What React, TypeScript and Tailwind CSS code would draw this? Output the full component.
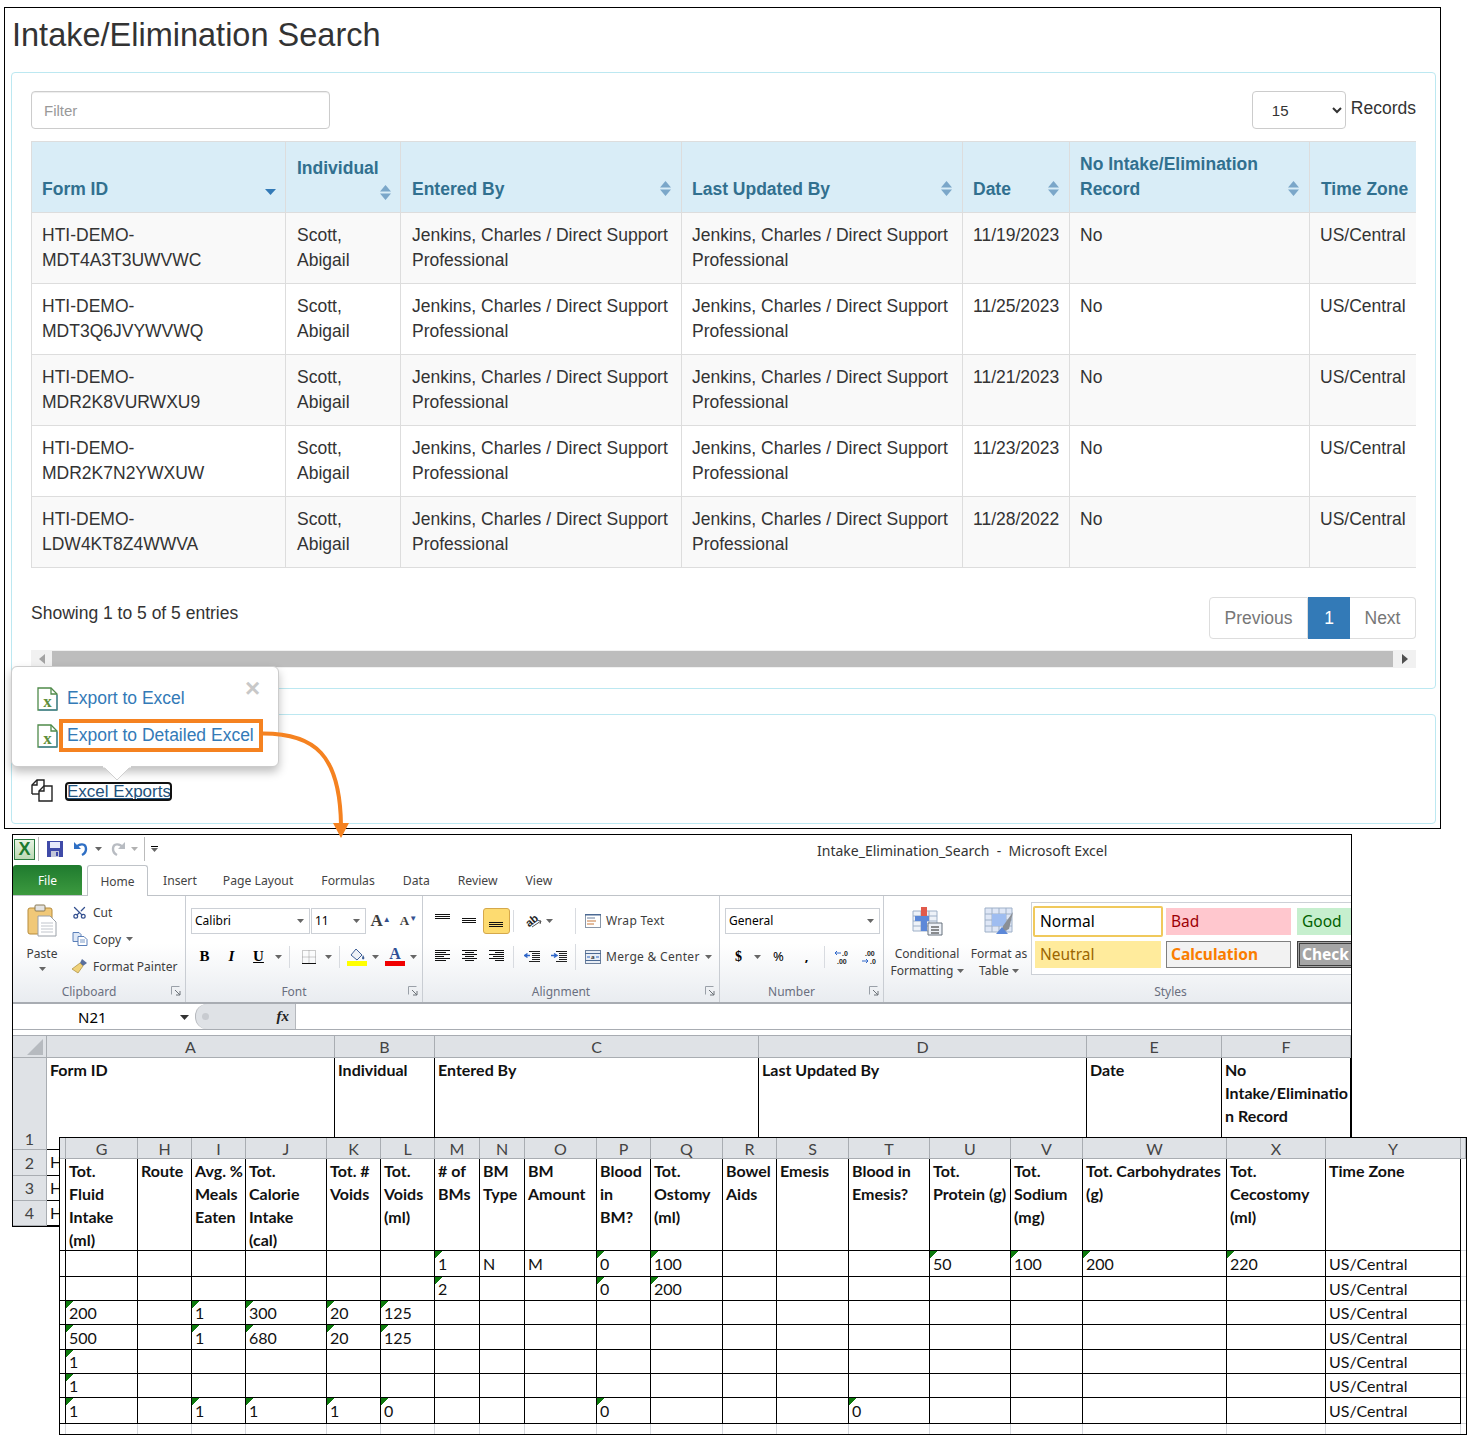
import { Scissors } from 'lucide-react'

const rows = [
  ['HTI-DEMO-', 'MDT4A3T3UWVWC', '11/19/2023'],
  ['HTI-DEMO-', 'MDT3Q6JVYWVWQ', '11/25/2023'],
  ['HTI-DEMO-', 'MDR2K8VURWXU9', '11/21/2023'],
  ['HTI-DEMO-', 'MDR2K7N2YWXUW', '11/23/2023'],
  ['HTI-DEMO-', 'LDW4KT8Z4WWVA', '11/28/2022'],
]

function SortIcon({ sorted, mb = 'mb-[6px]' }: { sorted?: boolean; mb?: string }) {
  if (sorted) {
    return (
      <svg width="11" height="6" viewBox="0 0 11 6" className="mb-[7px] mr-[-1px] shrink-0">
        <path d="M0 0h11L5.5 6z" fill="#337ab7" />
      </svg>
    )
  }
  return (
    <svg width="11" height="15" viewBox="0 0 11 15" className={`${mb} shrink-0`}>
      <path d="M5.5 0L11 6.5H0z M0 8.5h11L5.5 15z" fill="#7ba7c9" />
    </svg>
  )
}

function Th({ children, sorted, stack, pad = 'pl-[10px]' }: { children: React.ReactNode; sorted?: boolean; stack?: boolean; pad?: string }) {
  return (
    <th className={`border border-[#ddd] py-[10px] pr-[10px] ${pad} text-left align-bottom font-bold text-[#31708f]`}>
      {stack ? (
        <div className="flex flex-col">
          <span>{children}</span>
          <span className="mr-[-1px] flex h-[21px] items-end justify-end">
            <SortIcon mb="mb-[2px]" />
          </span>
        </div>
      ) : (
        <div className="flex items-end justify-between">
          <span>{children}</span>
          <SortIcon sorted={sorted} />
        </div>
      )}
    </th>
  )
}

function ExcelFile() {
  return (
    <svg width="21" height="24" viewBox="0 0 21 24" className="shrink-0">
      <path d="M1 1h13l6 6v16H1z" fill="#fff" stroke="#4f8a4a" strokeWidth="1.3" />
      <path d="M14 1v6h6" fill="none" stroke="#4f8a4a" strokeWidth="1.3" />
      <path d="M20 8v15H2" fill="none" stroke="#3a7cb0" strokeWidth="1" />
      <text x="10.5" y="20" textAnchor="middle" fontSize="17" fontWeight="700" fill="#5e8f3a" fontFamily="Liberation Serif, serif">x</text>
    </svg>
  )
}

function WebWindow() {
  const td = 'border border-[#ddd] p-[10px] align-top'
  return (
    <div className="absolute left-[4px] top-[7px] h-[822px] w-[1437px] border border-black bg-white font-['Liberation_Sans',Arial,sans-serif] text-[17.5px] leading-[25px] text-[#333]">
      <div className="h-[64px] pl-[7px] pt-[9px] text-[32.5px] leading-[36px]">Intake/Elimination Search</div>

      <div className="ml-[6px] mr-[4px] h-[617px] rounded border border-[#bce8f1] px-[19px] pt-[18px]">
        <div className="flex h-[38px] justify-between">
          <input
            placeholder="Filter"
            className="h-[38px] w-[299px] rounded border border-[#ccc] px-[12px] text-[15px] shadow-[inset_0_1px_1px_rgba(0,0,0,0.075)] placeholder:text-[#999]"
          />
          <div className="flex gap-[5px]">
            <select className="h-[38px] w-[94px] rounded border border-[#ccc] bg-white pl-[15px] text-[15px]">
              <option>15</option>
            </select>
            <span className="mt-[5px]">Records</span>
          </div>
        </div>

        <div className="mt-[12px] overflow-hidden">
          <table className="w-[1385px] table-fixed border-collapse">
            <colgroup>
              <col className="w-[254px]" />
              <col className="w-[115px]" />
              <col className="w-[281px]" />
              <col className="w-[281px]" />
              <col className="w-[107px]" />
              <col className="w-[240px]" />
              <col className="w-[107px]" />
            </colgroup>
            <thead>
              <tr className="h-[71px] bg-[#d9edf7]">
                <Th sorted>Form ID</Th>
                <Th stack pad="pl-[11px]">Individual</Th>
                <Th pad="pl-[11px]">Entered By</Th>
                <Th>Last Updated By</Th>
                <Th>Date</Th>
                <Th>No Intake/Elimination Record</Th>
                <th className="border-y border-l border-[#ddd] p-[10px] pl-[11px] pr-0 text-left align-bottom font-bold whitespace-nowrap text-[#31708f]">Time Zone</th>
              </tr>
            </thead>
            <tbody>
              {rows.map((r, i) => (
                <tr key={r[1]} className={`h-[71px] ${i % 2 === 0 ? 'bg-[#f9f9f9]' : 'bg-white'}`}>
                  <td className={td}>{r[0]}<br />{r[1]}</td>
                  <td className={`${td} pl-[11px]`}>Scott,<br />Abigail</td>
                  <td className={`${td} pl-[11px] whitespace-nowrap`}>Jenkins, Charles / Direct Support<br />Professional</td>
                  <td className={`${td} whitespace-nowrap`}>Jenkins, Charles / Direct Support<br />Professional</td>
                  <td className={td}>{r[2]}</td>
                  <td className={td}>No</td>
                  <td className="border-y border-l border-[#ddd] p-[10px] pr-0 align-top">US/Central</td>
                </tr>
              ))}
            </tbody>
          </table>
        </div>

        <div className="mt-[29px] flex h-[42px] items-start justify-between">
          <span className="mt-[4px]">Showing 1 to 5 of 5 entries</span>
          <div className="flex h-[42px] items-stretch">
            <span className="flex w-[99px] items-center justify-center rounded-l border border-[#ddd] text-[#777]">Previous</span>
            <span className="flex w-[42px] items-center justify-center bg-[#337ab7] text-white">1</span>
            <span className="flex w-[66px] items-center justify-center rounded-r border border-l-0 border-[#ddd] text-[#777]">Next</span>
          </div>
        </div>

        <div className="mt-[11px] flex h-[18px] items-center bg-[#f1f1f1]">
          <span className="flex w-[21px] justify-center">
            <svg width="6" height="10" viewBox="0 0 6 10"><path d="M6 0v10L0 5z" fill="#a3a3a3" /></svg>
          </span>
          <span className="h-[16px] flex-1 bg-[#bdbdbd]" />
          <span className="flex w-[23px] justify-center">
            <svg width="6" height="10" viewBox="0 0 6 10"><path d="M0 0v10l6-5z" fill="#505050" /></svg>
          </span>
        </div>
      </div>

      <div className="ml-[6px] mr-[4px] mt-[25px] flex h-[110px] items-end gap-[14px] rounded border border-[#bce8f1] px-[19px] pb-[24px]">
        <svg width="22" height="24" viewBox="0 0 22 24" fill="none" stroke="#222" strokeWidth="1.4" className="mb-[-3px]">
          <path d="M1 16V7l5-5h7v6" />
          <path d="M6 2v5H1" />
          <path d="M1 16h7" />
          <path d="M8 23V13l5-5h8v15z" fill="#fff" />
          <path d="M13 8v5H8" />
        </svg>
        <a className="h-[15px] w-[103px] overflow-visible whitespace-nowrap rounded-[2px] text-[17px] leading-[15px] text-[#23527c] underline outline-2 outline-[#111]">Excel Exports</a>
      </div>
    </div>
  )
}

function Popover() {
  return (
    <>
      <div className="absolute left-[11px] top-[666px] h-[101px] w-[268px] whitespace-nowrap rounded-md border border-[#ccc] bg-white pl-[25px] pt-[19px] font-['Liberation_Sans',Arial,sans-serif] text-[17.5px] leading-[25px] text-[#337ab7] shadow-[0_5px_10px_rgba(0,0,0,0.25)]">
        <span className="absolute left-[233px] top-[9px] text-[26px] font-bold text-[#c8c8c8]">×</span>
        <div className="flex h-[25px] items-center gap-[9px]">
          <ExcelFile />
          <span>Export to Excel</span>
        </div>
        <div className="mt-[8px] flex h-[33px] items-center gap-[1px]">
          <ExcelFile />
          <span className="flex h-[33px] w-[204px] items-center border-4 border-[#f58220] pl-[4px]">Export to Detailed Excel</span>
        </div>
      </div>
      <svg width="28" height="14" viewBox="0 0 28 14" className="absolute left-[103px] top-[766px]">
        <path d="M1 1l13 13L27 1" fill="#fff" stroke="#d0d0d0" />
        <path d="M0 0h28v1.5H0z" fill="#fff" />
      </svg>
      <svg width="100" height="120" viewBox="0 0 100 120" className="absolute left-[260px] top-[725px]">
        <path d="M3 8.5C55 8.5 80 30 81 100" fill="none" stroke="#f58220" strokeWidth="4" />
        <path d="M73 98h16l-8 15z" fill="#f58220" />
      </svg>
    </>
  )
}

const caret = <svg width="7" height="4" viewBox="0 0 7 4"><path d="M0 0h7L3.5 4z" fill="#666" /></svg>

function Launcher() {
  return (
    <svg width="10" height="10" viewBox="0 0 10 10">
      <path d="M.5 .5h8M.5 .5v8" stroke="#9aa0a8" fill="none" />
      <path d="M4 4l5 5M5 9h4V5" stroke="#6d7379" fill="none" />
    </svg>
  )
}

function Group({ w, label, launcher, labelClass = '', children }: { w: string; label: string; launcher?: boolean; labelClass?: string; children: React.ReactNode }) {
  return (
    <div className={`${w} flex h-full shrink-0 flex-col border-r border-[#c9cdd3]`}>
      <div className="flex-1">{children}</div>
      <div className="flex h-[22px] items-center">
        <span className={`flex-1 text-center text-[12px] text-[#6a6f7f] ${labelClass} ${launcher ? 'pr-[6px]' : ''}`}>{label}</span>
        {launcher && <span className="mr-[4px] flex"><Launcher /></span>}
      </div>
    </div>
  )
}

function Btn({ children, w = 'w-[27px]', active }: { children: React.ReactNode; w?: string; active?: boolean }) {
  return (
    <span className={`flex h-[26px] shrink-0 items-center justify-center ${w} ${active ? 'rounded-[3px] border border-[#d5a84b] bg-[#fddb70]' : ''}`}>
      {children}
    </span>
  )
}

function Lines({ widths, align = 'left', top = 0 }: { widths: number[]; align?: 'left' | 'center' | 'right'; top?: number }) {
  return (
    <svg width="15" height="13" viewBox="0 0 15 13">
      {widths.map((w, i) => {
        const x = align === 'left' ? 0 : align === 'right' ? 15 - w : (15 - w) / 2
        return <path key={i} d={`M${x} ${top + i * 2 + 0.5}h${w}`} stroke="#111" strokeWidth="1" />
      })}
    </svg>
  )
}

function Indent({ flip }: { flip?: boolean }) {
  return (
    <svg width="16" height="14" viewBox="0 0 16 14">
      <path d="M5 1.5h11M8 3.5h8M8 5.5h8M8 7.5h8M8 9.5h8M5 11.5h11" stroke="#222" />
      <path d={flip ? 'M0 5.5h5M3 3.5l3 2-3 2' : 'M1 5.5h5M3.5 3.5l-3 2 3 2'} stroke="#2f66c8" strokeWidth="1.5" fill="none" />
    </svg>
  )
}

function Sep({ h = 'h-[22px]', m = 'mx-[5px]' }: { h?: string; m?: string }) {
  return <span className={`w-px shrink-0 ${m} ${h} bg-[#d8dbe0]`} />
}

function FileTab({ children, m = '' }: { children: React.ReactNode; m?: string }) {
  return <span className={`flex h-[30px] items-center px-[14px] pt-[3px] text-[12.2px] text-[#444] ${m}`}>{children}</span>
}

function Ribbon() {
  return (
    <div className="flex h-[107px] bg-[linear-gradient(#ffffff_45%,#e9ecf0_100%)] text-[12px] leading-[15px] text-[#3d3d3d]">
      <Group w="w-[173px]" label="Clipboard" launcher>
        <div className="flex pt-[8px]">
          <div className="flex w-[58px] flex-col items-center">
            <svg width="30" height="33" viewBox="0 0 30 33">
              <rect x="1" y="4" width="24" height="26" rx="2" fill="#f0c878" stroke="#b68b3b" />
              <rect x="8" y="1" width="10" height="6" rx="1" fill="#e3e3e3" stroke="#8a7a55" />
              <path d="M11 12h12l6 6v14H11z" fill="#fff" stroke="#9aa0a8" />
              <path d="M14 19h12M14 22h12M14 25h12M14 28h12" stroke="#c1c5cc" />
            </svg>
            <span className="mt-[9px]">Paste</span>
            <span className="mt-[6px] flex">{caret}</span>
          </div>
          <div className="flex flex-col gap-[12px] pl-[1px] pt-[1px]">
            <span className="flex h-[15px] items-center gap-[5px]">
              <Scissors size={15} className="-rotate-90 text-[#34508f]" />
              <span className="ml-[1px]">Cut</span>
            </span>
            <span className="flex h-[15px] items-center gap-[5px]">
              <svg width="16" height="14" viewBox="0 0 16 14">
                <path d="M1 .5h6l2 2v7H1z" fill="#dfe9f7" stroke="#5a7fb8" />
                <path d="M6 4.5h6l3 3v6H6z" fill="#fff" stroke="#5a7fb8" />
                <path d="M8 8h5M8 10h5" stroke="#7a9ac8" />
              </svg>
              <span>Copy</span>
              {caret}
            </span>
            <span className="flex h-[15px] items-center gap-[5px]">
              <svg width="16" height="16" viewBox="0 0 16 16">
                <path d="M10 1l5 4-4 3-3-3z" fill="#5a6f9c" />
                <path d="M8 5l3 3-5 7-6-4z" fill="#f0d27a" stroke="#a88a3a" strokeWidth=".7" />
              </svg>
              <span>Format Painter</span>
            </span>
          </div>
        </div>
      </Group>

      <Group w="w-[237px]" label="Font" launcher>
        <div className="flex items-center pl-[5px] pt-[12px]">
          <span className="flex h-[26px] w-[119px] items-center justify-between border border-[#ccd0d6] bg-white pl-[3px] pr-[5px] text-black">Calibri{caret}</span>
          <span className="ml-[1px] flex h-[26px] w-[55px] items-center justify-between border border-[#ccd0d6] bg-white pl-[3px] pr-[5px] text-black">11{caret}</span>
          <Btn w="w-[29px]"><span className="font-['Liberation_Serif',serif] text-[17px] font-bold">A<sup className="text-[8px] text-[#34508f]">▲</sup></span></Btn>
          <Btn w="w-[27px]"><span className="font-['Liberation_Serif',serif] text-[13px] font-bold">A<sup className="text-[8px] text-[#34508f]">▼</sup></span></Btn>
        </div>
        <div className="mt-[10px] flex items-center pl-[5px] font-['Liberation_Serif',serif] text-[15px] text-black">
          <Btn><b>B</b></Btn>
          <Btn><b><i>I</i></b></Btn>
          <Btn><b className="underline">U</b></Btn>
          <span className="flex w-[12px] justify-center">{caret}</span>
          <Sep />
          <Btn>
            <svg width="14" height="14" viewBox="0 0 14 14">
              <path d="M.5 .5h13v13H.5zM7 .5v13M.5 7h13" fill="none" stroke="#999" strokeDasharray="1 1" />
              <path d="M0 13.5h14" stroke="#111" />
            </svg>
          </Btn>
          <span className="flex w-[12px] justify-center">{caret}</span>
          <Sep />
          <span className="flex w-[24px] flex-col items-center">
            <svg width="16" height="13" viewBox="0 0 16 13">
              <path d="M7 1l6 6-5 5-6-5z" fill="#eef1f6" stroke="#3e5f96" />
              <path d="M14 7c1 2 2 3 1 4s-2 0-2-1z" fill="#3e5f96" />
            </svg>
            <span className="h-[5px] w-[20px] bg-[#ffff00]" />
          </span>
          <span className="flex w-[12px] justify-center">{caret}</span>
          <span className="ml-[2px] flex w-[24px] flex-col items-center">
            <span className="h-[14px] text-[16px] font-bold leading-[14px] text-[#2f4f96]">A</span>
            <span className="h-[5px] w-[20px] bg-[#f00000]" />
          </span>
          <span className="flex w-[12px] justify-center">{caret}</span>
        </div>
      </Group>

      <Group w="w-[297px]" label="Alignment" launcher>
        <div className="flex items-center pl-[6px] pt-[12px]">
          <Btn><Lines widths={[15, 15, 15]} /></Btn>
          <Btn><Lines widths={[14, 14, 14]} top={4} /></Btn>
          <Btn active><Lines widths={[14, 14, 14]} top={8} /></Btn>
          <Sep m="mx-[3px]" />
          <span className="ml-[4px] flex">
            <Btn w="w-[24px]">
              <svg width="19" height="16" viewBox="0 0 19 16">
                <text x="2" y="12" fontSize="11" fontWeight="700" fill="#222" transform="rotate(-38 7 9)" fontFamily="Liberation Sans, sans-serif">ab</text>
                <path d="M8 14l9-6M14 7.5l3 .5-1 3" stroke="#555" fill="none" />
              </svg>
            </Btn>
          </span>
          <span className="flex w-[8px] justify-center">{caret}</span>
          <Sep h="h-[26px]" m="ml-[22px] mr-[9px]" />
          <span className="flex items-center gap-[5px] tracking-[0.3px]">
            <svg width="16" height="14" viewBox="0 0 16 14">
              <rect x=".5" y=".5" width="15" height="13" fill="#fff" stroke="#8a97a8" />
              <path d="M0 .5h16" stroke="#4c6a94" strokeWidth="2" />
              <path d="M2 4h8" stroke="#6b7f9c" /><path d="M2 7h9" stroke="#c8793a" /><path d="M2 10h7" stroke="#c8793a" />
            </svg>
            Wrap Text
          </span>
        </div>
        <div className="mt-[10px] flex items-center pl-[6px]">
          <Btn><Lines widths={[15, 11, 15, 9, 15, 11]} /></Btn>
          <Btn><Lines widths={[15, 9, 15, 9, 15, 9]} align="center" /></Btn>
          <Btn><Lines widths={[15, 9, 15, 11, 15, 9]} align="right" /></Btn>
          <Sep m="mx-[3px]" />
          <span className="ml-[1px] flex">
            <Btn><Indent /></Btn>
            <Btn><Indent flip /></Btn>
          </span>
          <Sep h="h-[26px]" m="ml-[3px] mr-[9px]" />
          <span className="flex items-center gap-[5px] tracking-[0.3px]">
            <svg width="16" height="14" viewBox="0 0 16 14">
              <rect x=".5" y=".5" width="15" height="13" fill="#e8edf4" stroke="#6b7f9c" />
              <path d="M0 3.5h16M.5 10.5h15" stroke="#4c6a94" />
              <path d="M2 7h3M11 7h3" stroke="#2f66c8" />
              <text x="8" y="9" fontSize="6" textAnchor="middle" fontWeight="700" fill="#333">a</text>
            </svg>
            Merge &amp; Center
            {caret}
          </span>
        </div>
      </Group>

      <Group w="w-[164px]" label="Number" launcher>
        <div className="pl-[5px] pt-[12px]">
          <span className="flex h-[26px] w-[155px] items-center justify-between border border-[#ccd0d6] bg-white pl-[3px] pr-[5px] text-black">General{caret}</span>
        </div>
        <div className="mt-[10px] flex items-center pl-[5px] text-[13px] text-black">
          <Btn><b className="font-['Liberation_Serif',serif] text-[14px]">$</b></Btn>
          <span className="flex w-[11px] justify-center">{caret}</span>
          <span className="ml-[2px] flex">
            <Btn><span>%</span></Btn>
            <Btn w="w-[29px]"><b>,</b></Btn>
          </span>
          <Sep m="ml-[3px] mr-[4px]" />
          <Btn>
            <svg width="18" height="16" viewBox="0 0 18 16">
              <text x="8" y="7" fontSize="7" fontWeight="700" fill="#222" fontFamily="Liberation Sans, sans-serif">.0</text>
              <text x="3" y="15" fontSize="7" fontWeight="700" fill="#222" fontFamily="Liberation Sans, sans-serif">.00</text>
              <path d="M1 4h6M3 2L1 4l2 2" stroke="#2f66c8" fill="none" />
            </svg>
          </Btn>
          <Btn>
            <svg width="18" height="16" viewBox="0 0 18 16">
              <text x="4" y="7" fontSize="7" fontWeight="700" fill="#222" fontFamily="Liberation Sans, sans-serif">.00</text>
              <text x="9" y="15" fontSize="7" fontWeight="700" fill="#222" fontFamily="Liberation Sans, sans-serif">.0</text>
              <path d="M1 12h6M5 10l2 2-2 2" stroke="#2f66c8" fill="none" />
            </svg>
          </Btn>
        </div>
      </Group>

      <Group w="flex-1 border-r-0" label="Styles" labelClass="pl-[100px]">
        <div className="flex pt-[6px]">
          <div className="mt-[4px] flex w-[86px] flex-col items-center text-center">
            <svg width="31" height="30" viewBox="0 0 31 30">
              <path d="M1 5h24v20H1z" fill="#eef2f8" stroke="#9eb0c8" />
              <path d="M1 10h24M1 15h24M1 20h24M9 5v20M17 5v20" stroke="#9eb0c8" />
              <path d="M9 1h6v14H9z" fill="#e15a4b" /><path d="M3 10h14v5H3z" fill="#5c88d8" /><path d="M9 15h6v10H9z" fill="#5c88d8" />
              <path d="M16 17h14v12H16z" fill="#eef2f8" stroke="#66707c" />
              <path d="M19 21h8M19 24h8M19 27h8" stroke="#222" />
            </svg>
            <span className="mt-[9px] leading-[17px]">Conditional<br />Formatting <span className="inline-flex align-middle">{caret}</span></span>
          </div>
          <div className="mt-[4px] flex w-[58px] flex-col items-center text-center">
            <svg width="31" height="30" viewBox="0 0 31 30">
              <path d="M1 2h27v24H1z" fill="#dfe7f6" stroke="#9eb0c8" />
              <path d="M1 8h27M1 14h27M1 20h27M8 2v24M15 2v24M22 2v24" stroke="#9eb0c8" />
              <path d="M8 8h14v12H8z" fill="#9fbdf0" />
              <path d="M29 6L19 20l-2 7 8-4z" fill="#8a8f96" />
              <path d="M18 21l-6 7h12z" fill="#5c88d8" />
            </svg>
            <span className="mt-[9px] whitespace-nowrap leading-[17px]">Format as<br />Table <span className="inline-flex align-middle">{caret}</span></span>
          </div>
          <div className="ml-[3px] flex h-[73px] flex-1 flex-col gap-[4px] overflow-hidden border border-r-0 border-[#ccd0d6] bg-white pl-[1px] pt-[3px] text-[15.5px]">
            <div className="flex h-[31px] items-center">
              <span className="flex h-[31px] w-[130px] items-center rounded-[2px] border-2 border-[#f0c95c] pl-[5px] text-black">Normal</span>
              <span className="ml-[3px] flex h-[27px] w-[125px] items-center bg-[#ffc7ce] pl-[5px] text-[#9c0006]">Bad</span>
              <span className="ml-[6px] flex h-[27px] w-[60px] items-center bg-[#c6efce] pl-[5px] text-[#006100]">Good</span>
            </div>
            <div className="flex h-[27px] items-center">
              <span className="ml-[2px] flex h-[27px] w-[126px] items-center bg-[#ffeb9c] pl-[5px] text-[#9c6500]">Neutral</span>
              <span className="ml-[5px] flex h-[27px] w-[125px] items-center border border-[#7f7f7f] bg-[#f2f2f2] pl-[4px] font-bold text-[#fa7d00]">Calculation</span>
              <span className="ml-[6px] flex h-[27px] w-[60px] items-center border-[3px] border-double border-[#3f3f3f] bg-[#a5a5a5] pl-[2px] font-bold text-white">Check</span>
            </div>
          </div>
        </div>
      </Group>
    </div>
  )
}

function ColHead({ children }: { children?: React.ReactNode }) {
  return <div className="flex items-center justify-center border-r border-b border-[#a9adb2] bg-[#dfe2e6] text-[16px] text-[#444]">{children}</div>
}

function RowHead({ children, bottom }: { children: React.ReactNode; bottom?: boolean }) {
  return <div className={`flex justify-center border-r border-b border-[#a9adb2] bg-[#dfe2e6] text-[16px] leading-[20px] text-[#444] ${bottom ? 'items-end' : 'items-center'}`}>{children}</div>
}

function BackCell({ text, bold }: { text?: string; bold?: boolean }) {
  return <div className={`whitespace-pre-line border-r border-b border-black pl-[3px] text-[16px] leading-[23px] text-[#111] ${bold ? 'font-bold' : ''}`}>{text}</div>
}

function ExcelWindow() {
  return (
    <div className="absolute left-[12px] top-[834px] flex h-[393px] w-[1340px] flex-col overflow-hidden border border-black bg-white font-['Noto_Sans',sans-serif]">
      <div className="flex h-[29px] items-center pl-[1px] text-[14px]">
        <span className="flex h-[21px] w-[21px] items-center justify-center border border-[#2b7a3f] bg-[linear-gradient(#e9f3e3,#bcd9b4)] font-['Liberation_Sans',sans-serif] text-[18px] font-bold text-[#1d7a2f]">X</span>
        <span className="ml-[3px] h-[24px] w-px bg-[#bbb]" />
        <span className="ml-[8px] flex">
          <svg width="16" height="16" viewBox="0 0 16 16">
            <path d="M0 0h16v16H0z" fill="#3f4aa8" />
            <path d="M3 1h10v6H3z" fill="#e6e9fb" />
            <path d="M4 10h8v6H4z" fill="#c2c6d8" /><path d="M9 11h2v4H9z" fill="#3f4aa8" />
          </svg>
        </span>
        <span className="ml-[11px] flex">
          <svg width="14" height="16" viewBox="0 0 14 16" fill="none">
            <path d="M2 7c3-5 10-5 10 1 0 3-2 5-4 6" stroke="#2f6fc4" strokeWidth="2.4" />
            <path d="M0 1v7h7z" fill="#2f6fc4" />
          </svg>
        </span>
        <span className="ml-[7px] flex">{caret}</span>
        <span className="ml-[9px] flex">
          <svg width="14" height="16" viewBox="0 0 14 16" fill="none">
            <path d="M12 7C9 2 2 2 2 8c0 3 2 5 4 6" stroke="#b8bcc2" strokeWidth="2.4" />
            <path d="M14 1v7H7z" fill="#b8bcc2" />
          </svg>
        </span>
        <span className="ml-[6px] flex opacity-50">{caret}</span>
        <span className="ml-[6px] h-[24px] w-px bg-[#bbb]" />
        <span className="ml-[6px] flex flex-col items-center gap-[1px]">
          <span className="h-px w-[7px] bg-black" />
          {caret}
        </span>
        <span className="ml-[659px] mt-[3px] whitespace-pre text-[14px] text-[#333]">Intake_Elimination_Search  -  Microsoft Excel</span>
      </div>

      <div className="flex h-[32px] items-end border-b border-[#bfc3c8]">
        <span className="flex h-[30px] w-[69px] items-center justify-center rounded-t-[3px] bg-[linear-gradient(#1f7a2e,#3c9a3f)] pt-[3px] text-[12px] text-white">File</span>
        <span className="mb-[-1px] ml-[5px] flex h-[31px] w-[61px] items-center justify-center rounded-t-[3px] border border-b-0 border-[#bfc3c8] bg-white pt-[3px] text-[12px] text-[#444]">Home</span>
        <span className="ml-[1px]"><FileTab m="mr-[-2px]">Insert</FileTab></span>
        <FileTab>Page Layout</FileTab>
        <FileTab>Formulas</FileTab>
        <FileTab>Data</FileTab>
        <FileTab>Review</FileTab>
        <FileTab>View</FileTab>
      </div>

      <Ribbon />
      <div className="h-[2px] bg-[#a8acb2]" />

      <div className="flex h-[25px] items-center">
        <span className="flex h-full w-[182px] items-center justify-between pl-[65px] pr-[6px] pt-[2px] text-[15px] text-black">N21<svg width="9" height="5" viewBox="0 0 9 5"><path d="M0 0h9L4.5 5z" fill="#333" /></svg></span>
        <span className="flex h-full w-[100px] items-center justify-between rounded-l-[12px] border-l border-[#b5b8bd] bg-[#dfe2e6] pl-[6px] pr-[6px]">
          <span className="h-[7px] w-[7px] rounded-full bg-[#c8cbd0]" />
          <span className="font-['Liberation_Serif',serif] text-[15px] font-bold italic text-[#222]">fx</span>
        </span>
        <span className="h-full flex-1 border-l border-[#b5b8bd]" />
      </div>
      <div className="h-[6px] border-t border-[#a8acb2]" />

      <div className="grid flex-1 grid-cols-[34px_288px_100px_324px_328px_135px_129px] grid-rows-[22px_92px_26px_25px_25px] border-t border-[#a8acb2] font-['Lato',sans-serif]">
        <div className="flex items-center justify-end border-r border-b border-[#a9adb2] bg-[#dfe2e6] pr-[3px]">
          <svg width="16" height="16" viewBox="0 0 16 16"><path d="M16 0v16H0z" fill="#b6babf" /></svg>
        </div>
        {['A', 'B', 'C', 'D', 'E', 'F'].map((c) => <ColHead key={c}>{c}</ColHead>)}
        <RowHead bottom>1</RowHead>
        <BackCell bold text="Form ID" />
        <BackCell bold text="Individual" />
        <BackCell bold text="Entered By" />
        <BackCell bold text="Last Updated By" />
        <BackCell bold text="Date" />
        <BackCell bold text={'No\nIntake/Eliminatio\nn Record'} />
        {['2', '3', '4'].map((n) => (
          <div key={n} className="contents">
            <RowHead>{n}</RowHead>
            <BackCell text="H" />
            <BackCell /><BackCell /><BackCell /><BackCell /><BackCell />
          </div>
        ))}
      </div>
    </div>
  )
}

const sheetCols = ['G', 'H', 'I', 'J', 'K', 'L', 'M', 'N', 'O', 'P', 'Q', 'R', 'S', 'T', 'U', 'V', 'W', 'X', 'Y']

const sheetHead: Record<string, string> = {
  G: 'Tot.\nFluid\nIntake\n(ml)',
  H: 'Route',
  I: 'Avg. %\nMeals\nEaten',
  J: 'Tot.\nCalorie\nIntake\n(cal)',
  K: 'Tot. #\nVoids',
  L: 'Tot.\nVoids\n(ml)',
  M: '# of\nBMs',
  N: 'BM\nType',
  O: 'BM\nAmount',
  P: 'Blood\nin\nBM?',
  Q: 'Tot.\nOstomy\n(ml)',
  R: 'Bowel\nAids',
  S: 'Emesis',
  T: 'Blood in\nEmesis?',
  U: 'Tot.\nProtein (g)',
  V: 'Tot.\nSodium\n(mg)',
  W: 'Tot. Carbohydrates\n(g)',
  X: 'Tot.\nCecostomy\n(ml)',
  Y: 'Time Zone',
}

const sheetRows: Record<string, string>[] = [
  { M: '1', N: 'N', O: 'M', P: '0', Q: '100', U: '50', V: '100', W: '200', X: '220' },
  { M: '2', P: '0', Q: '200' },
  { G: '200', I: '1', J: '300', K: '20', L: '125' },
  { G: '500', I: '1', J: '680', K: '20', L: '125' },
  { G: '1' },
  { G: '1' },
  { G: '1', I: '1', J: '1', K: '1', L: '0', P: '0', T: '0' },
]

function SheetWindow() {
  return (
    <div className="absolute left-[59px] top-[1137px] grid h-[298px] w-[1408px] grid-cols-[6px_72px_54px_54px_81px_54px_54px_45px_45px_72px_54px_72px_54px_72px_81px_81px_72px_144px_99px_135px_5px] grid-rows-[21px_92px_26px_24px_24px_25px_24px_24px_26px_10px] border border-black bg-white font-['Lato',sans-serif] text-[16px] leading-[23px] text-[#111]">
      <ColHead />
      {sheetCols.map((c) => <ColHead key={c}>{c}</ColHead>)}
      <ColHead />

      <div className="border-r border-b border-black" />
      {sheetCols.map((c) => (
        <div key={c} className="whitespace-pre-line border-r border-b border-black pl-[3px] font-bold">{sheetHead[c]}</div>
      ))}
      <div className="border-b border-[#d4d7dc]" />

      {sheetRows.map((row, i) => (
        <div key={i} className="contents">
          <div className="border-r border-b border-black" />
          {sheetCols.map((c) => {
            const v = c === 'Y' ? 'US/Central' : row[c]
            const flag = v && !['N', 'O', 'Y'].includes(c)
            return (
              <div
                key={c}
                className={`flex items-center border-r border-b border-black pl-[3px] ${flag ? 'bg-[linear-gradient(135deg,#0d7a0d_5px,transparent_5px)]' : ''}`}
              >
                {v}
              </div>
            )
          })}
          <div className="border-b border-[#d4d7dc]" />
        </div>
      ))}

      <div className="border-r border-[#d4d7dc]" />
      {sheetCols.map((c) => <div key={c} className="border-r border-[#d4d7dc]" />)}
      <div />
    </div>
  )
}

export default function App() {
  return (
    <div className="relative h-[1439px] w-[1475px] overflow-hidden bg-white">
      <WebWindow />
      <ExcelWindow />
      <SheetWindow />
      <Popover />
    </div>
  )
}
